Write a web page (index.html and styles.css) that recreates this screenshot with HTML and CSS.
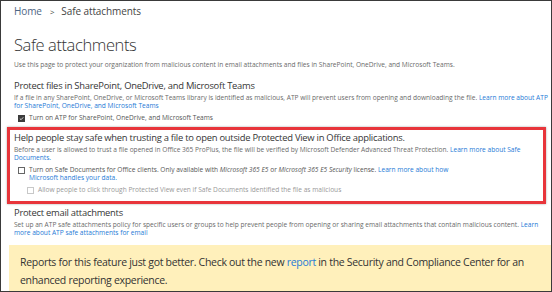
FILE: index.html
```html
<!DOCTYPE html>
<html lang="en">
<head>
<meta charset="utf-8">
<title>Safe attachments</title>
<link rel="stylesheet" href="styles.css">
</head>
<body>
<div class="frame">
  <nav class="crumbs"><span class="home">Home</span><span class="sep">&gt;</span><span>Safe attachments</span></nav>
  <h1 class="title">Safe attachments</h1>
  <p class="desc">Use this page to protect your organization from malicious content in email attachments and files in SharePoint, OneDrive, and Microsoft Teams.</p>

  <section class="sect">
    <h2 class="sect-h">Protect files in SharePoint, OneDrive, and Microsoft Teams</h2>
    <p class="small">If a file in any SharePoint, OneDrive, or Microsoft Teams library is identified as malicious, ATP will prevent users from opening and downloading the file. <a class="lnk">Learn more about ATP for SharePoint, OneDrive, and Microsoft Teams</a></p>
    <label class="chk-row"><span class="box checked"><svg viewBox="0 0 7 7" width="7" height="7"><path d="M1.2 3.6 L2.9 5.2 L5.9 1.9" fill="none" stroke="#fff" stroke-width="1.1"/></svg></span>Turn on ATP for SharePoint, OneDrive, and Microsoft Teams</label>
  </section>

  <section class="sect highlight">
    <h2 class="sect-h">Help people stay safe when trusting a file to open outside Protected View in Office applications.</h2>
    <p class="small">Before a user is allowed to trust a file opened in Office 365 ProPlus, the file will be verified by Microsoft Defender Advanced Threat Protection. <a class="lnk">Learn more about Safe Documents.</a></p>
    <label class="chk-row top"><span class="box"></span><span class="chk-text">Turn on Safe Documents for Office clients. Only available with <i>Microsoft 365 E5</i> or <i>Microsoft 365 E5 Security</i> license. <a class="lnk">Learn more about how Microsoft handles your data.</a></span></label>
    <label class="chk-row sub disabled"><span class="box dis"></span>Allow people to click through Protected View even if Safe Documents identified the file as malicious</label>
  </section>

  <section class="sect last">
    <h2 class="sect-h">Protect email attachments</h2>
    <p class="small">Set up an ATP safe attachments policy for specific users or groups to help prevent people from opening or sharing email attachments that contain malicious content. <a class="lnk">Learn more about ATP safe attachments for email</a></p>
  </section>

  <div class="banner">Reports for this feature just got better. Check out the new <a class="lnk">report</a> in the Security and Compliance Center for an enhanced reporting experience.</div>
</div>
</body>
</html>
```
FILE: styles.css
```css
html, body {
  margin: 0;
  padding: 0;
  background: #fff;
}
.frame {
  box-sizing: border-box;
  width: 552px;
  height: 292px;
  border: 1px solid #3a3a3a;
  overflow: hidden;
  font-family: "Open Sans", "Noto Sans", sans-serif;
  color: #333;
}
.crumbs {
  padding: 4px 0 0 13px;
  font-size: 10px;
  line-height: 12px;
  color: #444;
  letter-spacing: -0.1px;
}
.home { color: #4d6584; }
.sep { margin: 0 7px 0 8px; font-size: 8px; }
.title {
  margin: 17px 0 0 13px;
  font-size: 16.5px;
  line-height: 20px;
  font-weight: 300;
  color: #333;
  letter-spacing: -0.4px;
}
.desc {
  margin: 5px 0 0 13px;
  font-size: 6.6px;
  line-height: 9px;
  color: #6a6a6a;
}
.sect { margin: 0 0 0 13px; }
.sect-h {
  margin: 10px 0 1px;
  font-size: 9.4px;
  line-height: 14px;
  font-weight: 400;
  color: #363636;
  letter-spacing: -0.25px;
}
.small {
  margin: 0;
  font-size: 6.6px;
  line-height: 8px;
  color: #6a6a6a;
}
.lnk { color: #1e7ad6; text-decoration: none; }
.chk-row {
  display: flex;
  align-items: center;
  gap: 4px;
  margin: 4px 0 0 4px;
  font-size: 6.6px;
  line-height: 8px;
  color: #555;
}
.chk-row.top { align-items: flex-start; }
.chk-row.top .box { margin-top: 0.5px; }
.chk-text { width: 440px; }
.box {
  flex: none;
  box-sizing: border-box;
  width: 7px;
  height: 7px;
  border: 1px solid #666;
  background: #fff;
  display: flex;
  align-items: center;
  justify-content: center;
}
.box.checked { background: #3c3c3c; border-color: #3c3c3c; }
.box.dis { border-color: #c8c8c8; }
.chk-row.sub { margin-left: 13px; margin-top: 4px; }
.disabled { color: #999; }
.highlight {
  margin: 5px 5px 0 6px;
  border: 3px solid #e8353b;
  box-shadow: 0 0 2px rgba(0,0,0,0.35);
  padding: 1px 6px 7px 4px;
}
.highlight .sect-h { margin-top: 0; }
.highlight .chk-row { margin-left: 4px; }
.highlight .chk-row.sub { margin-left: 13px; }
.last .sect-h { margin-top: 2px; }
.banner {
  margin: 8px 0 0 8px;
  background: #fff0bb;
  padding: 8px 12px 12px 11px;
  font-size: 10.5px;
  line-height: 18px;
  color: #333;
  letter-spacing: -0.3px;
}
```
